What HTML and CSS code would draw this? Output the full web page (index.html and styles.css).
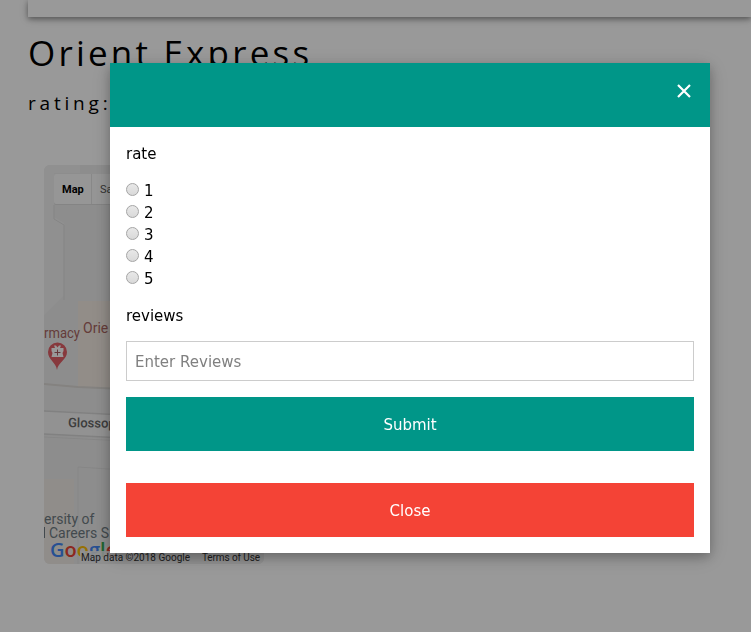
FILE: index.html
```html
<!DOCTYPE html>
<html lang="en">
<head>
<meta charset="utf-8">
<title>Orient Express</title>
<link rel="stylesheet" href="styles.css">
</head>
<body>
<main class="page">
  <div class="card"></div>
  <h1 class="title">Orient Express</h1>
  <h2 class="rating">rating:</h2>
  <svg class="map" width="220" height="399" viewBox="0 0 220 399">
    <rect width="220" height="400" fill="#ececec"/>
    <path d="M0 0H36V8H10V52L20 58V130L0 150Z" fill="#f0f0f0"/>
    <path d="M10 40V54L20 60V135M66 38V150H58" fill="none" stroke="#dedede"/>
    <path d="M34 136H80V224L34 222Z" fill="#f3ebe3"/>
    <path d="M0 219L34 222L80 224" fill="none" stroke="#dcd9d5" stroke-width="2"/>
    <path d="M0 246L80 250V273L0 269Z" fill="#f4f4f4"/>
    <path d="M0 246L80 250M0 269L80 273" fill="none" stroke="#d7d7d7" stroke-width="1.5"/>
    <path d="M0 272L80 276M34 400V302L80 305" fill="none" stroke="#e0e0e0"/>
    <path d="M0 314H30V400H0Z" fill="#f1ece6"/>
    <rect x="10" y="10" width="90" height="30" rx="2" fill="#dcdcdc"/>
    <rect x="10" y="9" width="90" height="30" rx="2" fill="#fafafa"/>
    <path d="M47.500 9V39" stroke="#e3e3e3"/>
    <text class="map-on" x="18" y="28">Map</text>
    <text class="map-off" x="56" y="28">Sa</text>
    <text class="poi" x="0" y="173" textLength="36" lengthAdjust="spacingAndGlyphs">rmacy</text>
    <text class="poi" x="39" y="168">Orie</text>
    <path d="M13 205C12 197 4 195 4 187A9.500 9.500 0 0 1 23 187C23 195 14 197 13 205Z" fill="#e15f66"/>
    <path d="M7.500 183H11L10 180.500H12L13.500 182.500L15 180.500H17L16 183H19.500V186L18.500 188L19.500 192H7.500L8.500 188L7.500 186Z" fill="#fff"/>
    <path d="M13.500 184.500V190.500M10.500 187.500H16.500" stroke="#a85a60"/>
    <text class="road" x="24" y="262" transform="rotate(1 24 262)">Glossop</text>
    <text class="place" x="0" y="359">ersity of</text>
    <path d="M.5 362V373" stroke="#6f7b82"/>
    <text class="place" x="5" y="373">Careers S</text>
    <text class="logo" x="6" y="392"><tspan fill="#4285f4">G</tspan><tspan fill="#ea4335">o</tspan><tspan fill="#fbbc05">o</tspan><tspan fill="#4285f4">g</tspan><tspan fill="#34a853">l</tspan><tspan fill="#ea4335">e</tspan></text>
    <rect x="36" y="386" width="184" height="13" fill="#f0f0f0" fill-opacity=".88"/>
    <text class="credit" x="37" y="396" textLength="109">Map data ©2018 Google</text>
    <text class="credit" x="158" y="396" textLength="58">Terms of Use</text>
  </svg>
</main>
<div class="overlay">
  <section class="modal">
    <header class="modal-head">
      <svg class="close-icon" width="14" height="14" viewBox="0 0 14 14"><path d="M1 1L13 13M13 1L1 13" fill="none" stroke="#fff" stroke-width="2.200"/></svg>
    </header>
    <form class="form">
      <p class="label">rate</p>
      <div class="rates">
        <label class="rate"><input type="radio" name="rate">1</label>
        <label class="rate"><input type="radio" name="rate">2</label>
        <label class="rate"><input type="radio" name="rate">3</label>
        <label class="rate"><input type="radio" name="rate">4</label>
        <label class="rate"><input type="radio" name="rate">5</label>
      </div>
      <p class="label">reviews</p>
      <input class="field" type="text" placeholder="Enter Reviews">
      <button class="btn submit" type="button">Submit</button>
      <button class="btn close" type="button">Close</button>
    </form>
  </section>
</div>
</body>
</html>
```
FILE: styles.css
```css
* { box-sizing: border-box; }
html, body { margin: 0; height: 100%; overflow: hidden; }
body { background: #fff; color: #000; font: 15px/22px Verdana, "DejaVu Sans", sans-serif; }
.page { padding-left: 28px; }
.card { height: 17px; box-shadow: 0 2px 5px rgba(0,0,0,.32), 0 2px 10px rgba(0,0,0,.2); }
.title, .rating { margin: 0; font-family: "Segoe UI", "Open Sans", sans-serif; font-weight: 400; white-space: nowrap; }
.title { margin-top: 9px; font-size: 35px; line-height: 54px; letter-spacing: 3.2px; }
.rating { margin-top: 8px; font-size: 19px; line-height: 30px; letter-spacing: 3.8px; }
.map { display: block; margin: 47px 0 0 16px; border-radius: 6px; font-family: Roboto, sans-serif; }
.map-on { font-size: 11px; font-weight: 700; }
.map-off { font-size: 11px; fill: #565656; }
.poi { font-size: 14px; fill: #a8645f; }
.road { font-size: 13px; font-weight: 500; fill: #666; }
.place { font-size: 14px; fill: #6f7b82; }
.logo { font: 600 20px "Open Sans", sans-serif; }
.credit { font-size: 10px; fill: #333; }
.overlay { position: fixed; inset: 0; padding: 63px 0 0 110px; background: rgba(0,0,0,.4); }
.modal { width: 600px; height: 490px; background: #fff; box-shadow: 0 4px 10px rgba(0,0,0,.2), 0 4px 20px rgba(0,0,0,.19); }
.modal-head { display: flex; justify-content: flex-end; height: 64px; padding: 21px 19px 0 0; background: #009688; }
.form { display: flex; flex-direction: column; padding: 16px; }
.label { margin: 0; line-height: 22px; }
.rates { margin: 15px 0; }
.rate { display: flex; align-items: center; gap: 5px; height: 22px; }
.rate input { appearance: none; width: 13px; height: 13px; margin: 0 0 4px; border: 1px solid #a5a5a5; border-radius: 50%; background: linear-gradient(#e8e8e8, #d9d9d9); }
.field { height: 40px; margin: 14px 0 16px; padding: 9px 8px 7px; border: 1px solid #ccc; font: inherit; }
.field::placeholder { color: #808080; opacity: 1; }
.btn { height: 54px; padding: 2px 0 0; border: 0; color: #fff; font: inherit; }
.submit { background: #009688; }
.close { margin-top: 32px; background: #f44336; }
```
